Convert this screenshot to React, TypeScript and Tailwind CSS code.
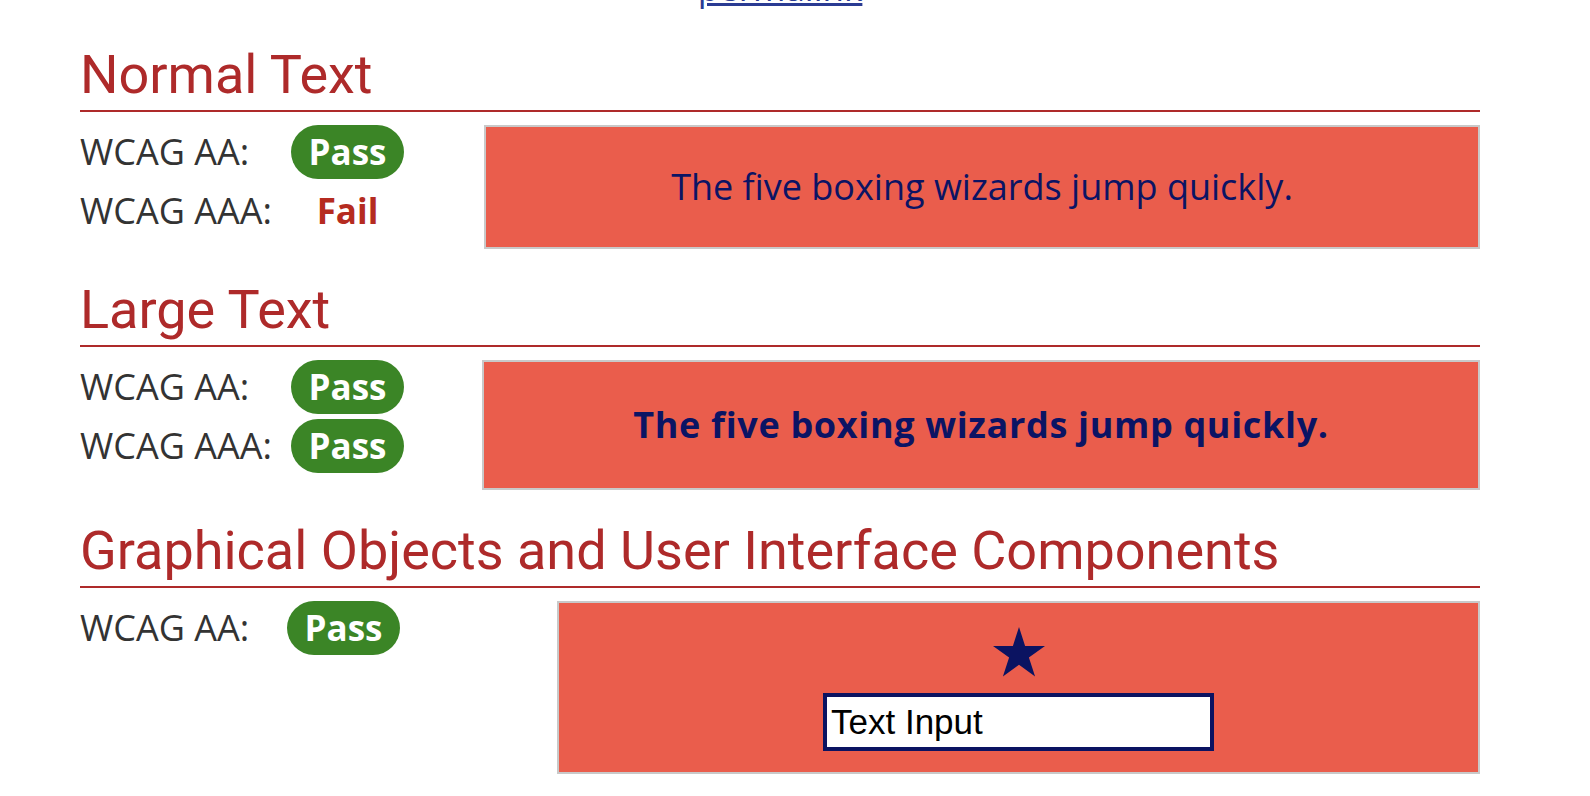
import React from 'react';

type Row = { label: string; result: 'Pass' | 'Fail' };

const Badge = ({ result }: { result: 'Pass' | 'Fail' }) =>
  result === 'Pass' ? (
    <span className="h-[54px] leading-[54px] px-[18px] rounded-full bg-[#3b8526] text-white font-bold text-[35px]">Pass</span>
  ) : (
    <span className="leading-[54px] text-[#b52b20] font-bold text-[35px]">Fail</span>
  );

const Section = ({
  title,
  rows,
  labelWidth,
  asideWidth,
  boxClass,
  children,
}: {
  title: string;
  rows: Row[];
  labelWidth: string;
  asideWidth: string;
  boxClass: string;
  children: React.ReactNode;
}) => (
  <section>
    <h2 className="font-['Roboto',sans-serif] text-[54px] leading-[66px] text-[#ae2a2a] pb-[2px] border-b-2 border-[#ae2a2a]">
      {title}
    </h2>
    <div className="mt-[13px] flex items-start">
      <div className={`${asideWidth} shrink-0 flex flex-col gap-[5px]`}>
        {rows.map((row) => (
          <div key={row.label} className="h-[54px] flex items-center">
            <span className={`${labelWidth} shrink-0 text-[36px] leading-[54px] text-[#333333]`}>{row.label}</span>
            <span className="w-[115px] flex justify-center">
              <Badge result={row.result} />
            </span>
          </div>
        ))}
      </div>
      <div className={`flex-1 bg-[#ea5d4c] border-2 border-[#c9c9c9] ${boxClass}`}>{children}</div>
    </div>
  </section>
);

export default function App() {
  return (
    <div className="min-h-screen bg-white font-['Open_Sans',sans-serif] overflow-hidden">
      <div className="ml-[80px] w-[1400px]">
        <div className="flex justify-center">
          <a href="#" className="-mt-[30px] text-[35px] leading-none text-[#2a3b93] underline">
            permalink
          </a>
        </div>

        <div className="mt-[37px] flex flex-col gap-[28px]">
          <Section
            title="Normal Text"
            rows={[
              { label: 'WCAG AA:', result: 'Pass' },
              { label: 'WCAG AAA:', result: 'Fail' },
            ]}
            labelWidth="w-[210px]"
            asideWidth="w-[404px]"
            boxClass="h-[124px] flex items-center justify-center"
          >
            <p className="text-[36px] text-[#0b1464]">The five boxing wizards jump quickly.</p>
          </Section>

          <Section
            title="Large Text"
            rows={[
              { label: 'WCAG AA:', result: 'Pass' },
              { label: 'WCAG AAA:', result: 'Pass' },
            ]}
            labelWidth="w-[210px]"
            asideWidth="w-[402px]"
            boxClass="h-[130px] flex items-center justify-center"
          >
            <p className="text-[36px] font-bold tracking-[0.66px] text-[#0b1464]">The five boxing wizards jump quickly.</p>
          </Section>

          <Section
            title="Graphical Objects and User Interface Components"
            rows={[{ label: 'WCAG AA:', result: 'Pass' }]}
            labelWidth="w-[206px]"
            asideWidth="w-[477px]"
            boxClass="h-[173px] flex flex-col items-center pt-[24px]"
          >
            <svg width="52" height="50" viewBox="0 0 52 50" aria-hidden="true">
              <polygon
                fill="#0b1361"
                points="26,0 32.1,18.9 52,18.9 35.9,30.6 42.1,49.5 26,37.8 9.9,49.5 16.1,30.6 0,18.9 19.9,18.9"
              />
            </svg>
            <input
              type="text"
              defaultValue="Text Input"
              className="mt-[16px] w-[391px] h-[58px] border-4 border-[#0b1361] bg-white px-[4px] text-[35px] text-black font-['Liberation_Sans',Arial,sans-serif] outline-none"
            />
          </Section>
        </div>
      </div>
    </div>
  );
}
